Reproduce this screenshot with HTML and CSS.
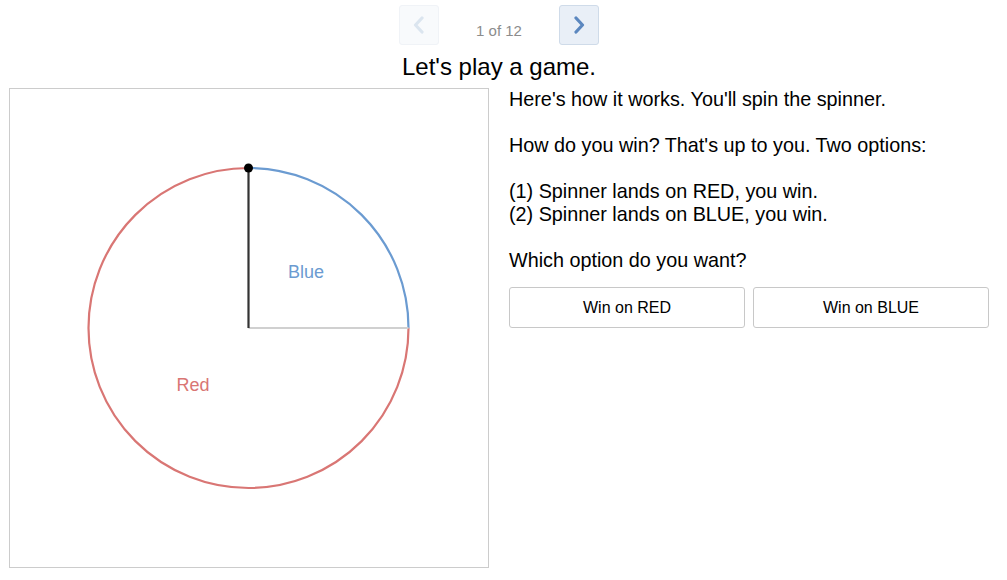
FILE: index.html
```html
<!DOCTYPE html>
<html>
<head>
<meta charset="utf-8">
<link rel="stylesheet" href="styles.css">
</head>
<body>
<div class="page">
  <div class="nav">
    <button class="navbtn disabled" aria-label="Previous">
      <svg width="14" height="18" viewBox="0 0 14 18"><path d="M10 2 L3.5 9 L10 16" fill="none" stroke="#dbe5ef" stroke-width="3.2" stroke-linecap="round" stroke-linejoin="round"/></svg>
    </button>
    <span class="count">1 of 12</span>
    <button class="navbtn" aria-label="Next">
      <svg width="14" height="18" viewBox="0 0 14 18"><path d="M4 2 L10.5 9 L4 16" fill="none" stroke="#5b87bf" stroke-width="3.2" stroke-linecap="round" stroke-linejoin="round"/></svg>
    </button>
  </div>
  <h1 class="title">Let's play a game.</h1>
  <div class="main">
    <div class="canvas">
      <svg width="478" height="478" viewBox="0 0 478 478">
        <path d="M238.5 79 A160 160 0 1 0 398.5 239" fill="none" stroke="#d97674" stroke-width="2.2"/>
        <path d="M238.5 79 A160 160 0 0 1 398.5 239" fill="none" stroke="#6b9bd1" stroke-width="2.2"/>
        <line x1="238.5" y1="239" x2="398.5" y2="239" stroke="#d0d0d0" stroke-width="2"/>
        <line x1="238.5" y1="239" x2="238.5" y2="79" stroke="#333" stroke-width="2.2"/>
        <circle cx="238.5" cy="79" r="4.5" fill="#000"/>
        <text x="296" y="188.5" class="lbl blue" text-anchor="middle">Blue</text>
        <text x="183" y="301.5" class="lbl red" text-anchor="middle">Red</text>
      </svg>
    </div>
    <div class="side">
      <p>Here's how it works. You'll spin the spinner.</p>
      <p>How do you win? That's up to you. Two options:</p>
      <p>(1) Spinner lands on RED, you win.<br>(2) Spinner lands on BLUE, you win.</p>
      <p class="last">Which option do you want?</p>
      <div class="choices">
        <button class="choice">Win on RED</button>
        <button class="choice">Win on BLUE</button>
      </div>
    </div>
  </div>
</div>
</body>
</html>
```
FILE: styles.css
```css
html, body {
  margin: 0;
  padding: 0;
  background: #fff;
}
body {
  font-family: "Liberation Sans", Arial, sans-serif;
  color: #000;
}
.page {
  width: 980px;
  padding: 5px 0 0 9px;
}
.nav {
  display: flex;
  justify-content: center;
  align-items: center;
  height: 40px;
}
.navbtn {
  width: 40px;
  height: 40px;
  box-sizing: border-box;
  border: 1px solid #cfdbe9;
  border-radius: 3px;
  background: #e9eff7;
  display: flex;
  align-items: center;
  justify-content: center;
  padding: 0;
  margin: 0;
}
.navbtn.disabled {
  background: #f8fafc;
  border-color: #f0f3f7;
}
.count {
  width: 120px;
  text-align: center;
  font-size: 15px;
  color: #8c8c8c;
  padding-top: 10px;
}
.title {
  margin: 8px 0 0 0;
  font-size: 24px;
  font-weight: normal;
  text-align: center;
  line-height: 28px;
}
.main {
  display: flex;
  gap: 20px;
  margin-top: 7px;
}
.canvas {
  width: 478px;
  height: 478px;
  border: 1px solid #cccccc;
  flex: none;
}
.canvas svg {
  display: block;
}
.lbl {
  font-family: "Liberation Sans", Arial, sans-serif;
  font-size: 18px;
}
.lbl.blue { fill: #6b9bd1; }
.lbl.red { fill: #d97674; }
.side {
  width: 480px;
  font-size: 19.8px;
  line-height: 23px;
}
.side p {
  margin: 0 0 23px 0;
}
.side p.last {
  margin-bottom: 15px;
}
.choices {
  display: flex;
  gap: 8px;
}
.choice {
  flex: 1;
  height: 41px;
  background: #fff;
  border: 1px solid #c8c8c8;
  border-radius: 3px;
  font-family: "Liberation Sans", Arial, sans-serif;
  font-size: 16px;
  color: #000;
}
```
